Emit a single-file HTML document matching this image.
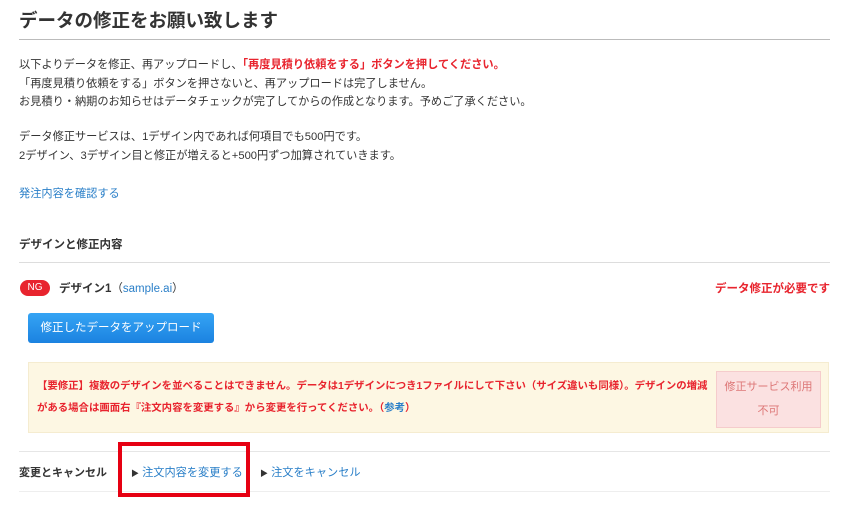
<!DOCTYPE html>
<html><head><meta charset="utf-8"><style>
body{margin:0;width:850px;height:516px;background:#fff;font-family:"Liberation Sans","Noto Sans CJK JP",sans-serif;color:#333;position:relative;overflow:hidden}
.a{position:absolute;white-space:nowrap}
.t{font-size:11.2px}
.red{color:#e8242e;font-weight:bold}
.blue{color:#2a7fc8}
.hr{position:absolute;left:19px;width:811px;height:1px;background:#ddd}
</style></head><body>
<div class="a" style="left:19px;top:7px;font-size:18.5px;font-weight:bold;color:#333">データの修正をお願い致します</div>
<div class="hr" style="top:39px;background:#bbb"></div>
<div class="a t" style="left:19px;top:56px">以下よりデータを修正、再アップロードし、<span class="red">「再度見積り依頼をする」ボタンを押してください。</span></div>
<div class="a t" style="left:19px;top:75px">「再度見積り依頼をする」ボタンを押さないと、再アップロードは完了しません。</div>
<div class="a t" style="left:19px;top:93px">お見積り・納期のお知らせはデータチェックが完了してからの作成となります。予めご了承ください。</div>
<div class="a t" style="left:19px;top:128px">データ修正サービスは、1デザイン内であれば何項目でも500円です。</div>
<div class="a t" style="left:19px;top:147px">2デザイン、3デザイン目と修正が増えると+500円ずつ加算されていきます。</div>
<div class="a t blue" style="left:19px;top:185px">発注内容を確認する</div>
<div class="a" style="left:19px;top:236px;font-size:11.5px;font-weight:bold">デザインと修正内容</div>
<div class="hr" style="top:262px"></div>
<div class="a" style="left:20px;top:280px;width:30px;height:16px;border-radius:8px;background:#e8242e;color:#fff;font-size:10px;line-height:16px;text-align:center">NG</div>
<div class="a" style="left:59px;top:280px;font-size:11.5px"><b>デザイン1</b>（<span class="blue">sample.ai</span>）</div>
<div class="a red" style="right:20px;top:280px;font-size:11.5px">データ修正が必要です</div>
<div class="a" style="left:28px;top:313px;width:186px;height:30px;border-radius:3px;background:linear-gradient(#35a4f4,#1b82e0);color:#fff;font-size:11.5px;line-height:30px;text-align:center">修正したデータをアップロード</div>
<div class="a" style="left:28px;top:362px;width:801px;height:71px;background:#fdf7e3;border:1px solid #f5ecd0;box-sizing:border-box"></div>
<div class="a" style="left:37px;top:376px;font-size:10.4px;line-height:22px;color:#e8242e;font-weight:bold">【要修正】複数のデザインを並べることはできません。データは1デザインにつき1ファイルにして下さい（サイズ違いも同様）。デザインの増減<br>がある場合は画面右『注文内容を変更する』から変更を行ってください。（<span class="blue">参考</span>）</div>
<div class="a" style="left:716px;top:371px;width:105px;height:57px;background:#fbe1e1;border:1px solid #f5cccc;box-sizing:border-box;color:#d77;font-size:11px;text-align:center;line-height:24px;padding-top:3px">修正サービス利用<br>不可</div>
<div class="hr" style="top:451px;background:#e6e6e6"></div>
<div class="a" style="left:19px;top:464px;font-size:11px;font-weight:bold">変更とキャンセル</div>
<div class="a t" style="left:131px;top:464px"><span style="font-size:8px;color:#333">▶</span> <span class="blue">注文内容を変更する</span></div>
<div class="a t" style="left:260px;top:464px"><span style="font-size:8px;color:#333">▶</span> <span class="blue">注文をキャンセル</span></div>
<div class="hr" style="top:491px;background:#eee"></div>
<div class="a" style="left:118px;top:442px;width:132px;height:55px;border:4px solid #e60012;box-sizing:border-box"></div>
</body></html>
